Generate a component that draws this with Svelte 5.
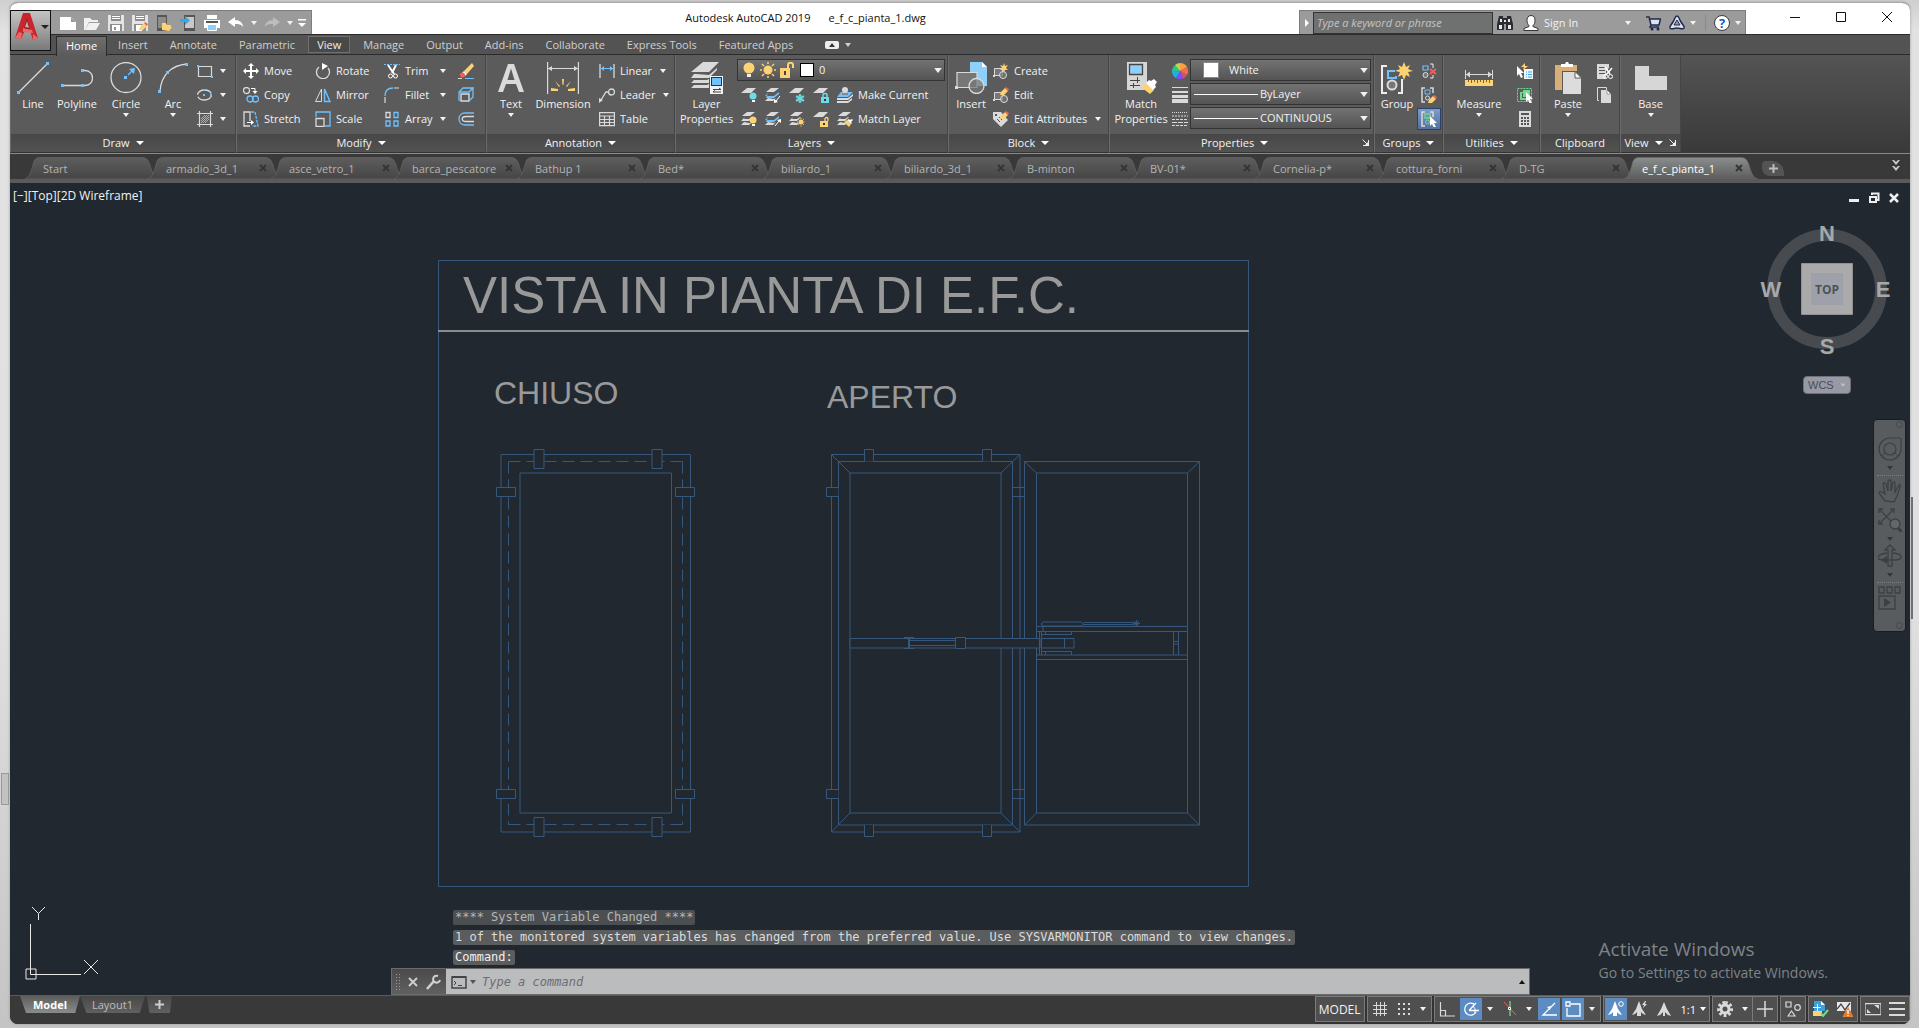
<script>
    let command = $state('');
    let keyword = $state('');
    let activeFile = $state('e_f_c_pianta_1');
    let activeMenu = $state('Home');

    const menus = ['Home', 'Insert', 'Annotate', 'Parametric', 'View', 'Manage', 'Output', 'Add-ins', 'Collaborate', 'Express Tools', 'Featured Apps'];
    const files = ['Start', 'armadio_3d_1', 'asce_vetro_1', 'barca_pescatore', 'Bathup 1', 'Bed*', 'biliardo_1', 'biliardo_3d_1', 'B-minton', 'BV-01*', 'Cornelia-p*', 'cottura_forni', 'D-TG', 'e_f_c_pianta_1'];
    const quick = ['new', 'open', 'save', 'saveas', 'webopen', 'websave', 'print'];

    const modify = [
        ['move', 'Move'], ['rotate', 'Rotate'], ['trim', 'Trim', true], ['erase', ''],
        ['copy', 'Copy'], ['mirror', 'Mirror'], ['fillet', 'Fillet', true], ['explode', ''],
        ['stretch', 'Stretch'], ['scale', 'Scale'], ['array', 'Array', true], ['offset', '']
    ];
    const layerTools = [
        ['layoff', ''], ['layiso', ''], ['layfreeze', ''], ['laylock', ''], ['laycurrent', 'Make Current'],
        ['layon', ''], ['layuniso', ''], ['laythaw', ''], ['layunlock', ''], ['laymatch', 'Match Layer']
    ];

    // palette of the ribbon icons
    const G = '#dadada';
    const B = '#6fc1ff';
    const Y = '#fdd272';
    const R = '#f2605a';
    const N = '#6fd98f';
    const C = '#6bdce8';

    const sheets = `<path fill="${G}" d="M6 1h8l-5 4H1zM4 6L0 10h8l4-4h-1l-3 2H3zM3 11l-3 3h8l2-2-2 0z"/>`;
    const blueSheets = `<path fill="${G}" d="M6 1h8l-5 4H1z"/><path fill="${B}" d="M3 6l-3 3h9l5-4v2l-5 4H1z"/><path fill="${G}" d="M3 11l-3 3h8l3-3-2 1z"/>`;
    const sheet = `<path fill="${G}" d="M6 1h9l-5 5H0z"/>`;
    const pencil = (x, y) => `<g transform="translate(${x} ${y})"><path fill="${Y}" d="M0 8l1-3 4-4 3 3-4 4z"/><path fill="${R}" d="M5 1l1-1 3 2-1 2z"/></g>`;
    const pointer = (x, y) => `<path transform="translate(${x} ${y})" fill="#fff" d="M0 0v10l2-2 2 4 2-1-2-4h3z"/>`;
    const lockY = (c) => `<path fill="${c}" d="M7 10h8v6H7z"/>`;
    const brackets = `<path stroke="${G}" fill="none" stroke-width="1.5" d="M4 1H1v14h3M9 1h3v5"/>`;

    const icons = {
        new: `<path fill="#fff" d="M0 2h11l5 5v8H0z"/><path fill="#9a9a9a" d="M11 2l5 5h-5z"/>`,
        open: `<path fill="#f1f1f1" d="M0 15V3h6l2 2h6v2H5L1 15z"/><path fill="#f1f1f1" d="M5 8h11l-4 7H1z"/>`,
        save: `<path fill="#e4e4e4" d="M0 0h16v16H0z"/><path fill="#8d8d8d" d="M3 0h10v6H3zM2 9h12v7H2z"/><path fill="#fff" d="M4 10h8v6H4zM4 1h8v1H4zM4 3h8v1H4z"/><path fill="#8d8d8d" d="M6 12h2v3H6z"/>`,
        saveas: `<path fill="#e4e4e4" d="M0 0h16v16H0z"/><path fill="#8d8d8d" d="M3 0h10v6H3zM2 9h12v7H2z"/><path fill="#fff" d="M4 10h6v6H4zM4 1h8v1H4zM4 3h8v1H4z"/>${pencil(7, 7)}`,
        webopen: `<path fill="#555" d="M1 0h10v16H1z"/><path fill="#8d8d8d" d="M2 2h8v11H2z"/><path fill="${Y}" d="M6 15V8h4l1 2h4v2h1l-3 4z"/>`,
        websave: `<path fill="#555" d="M4 0h11v16H4z"/><path fill="#c8c8c8" d="M5 2h9v11H5z"/><path fill="#38a6ee" d="M0 4h5V1l5 4.500-5 4.500V7H0z"/>`,
        print: `<path fill="#fff" d="M3 0h10v4H3zM0 5h16v8H0z"/><path fill="#555" d="M2 6h12v2H2z"/><path fill="#8fd0fb" d="M3 9h10v6H3z"/><path fill="none" stroke="#fff" d="M3.500 9.500h9v6h-9z"/>`,
        undo: `<path fill="#fff" d="M0 7l7-5v3c5 0 8 3 8 7-2-3-4-3-8-3v3z"/>`,
        redo: `<path fill="#bdbdbd" d="M16 7L9 2v3c-5 0-8 3-8 7 2-3 4-3 8-3v3z"/>`,
        custom: `<path fill="#fff" d="M4 4h8v1.500H4zM4 8h8l-4 4z"/>`,
        find: `<path fill="#2b2d33" d="M2 1h4v2h4V1h4l2 8v6H9V9H7v6H0V9z"/><path fill="#e9e9e9" d="M3 4h2v3H3zM11 4h2v3h-2zM2 10h3v4H2zM11 10h3v4h-3zM7 5h2v2H7z"/>`,
        user: `<path fill="#fff" stroke="#333" d="M8 .5c3 0 4 2 4 5s-1 4-2 5v1l5 2v2H1v-2l5-2v-1C5 9.500 4 8 4 5.500s1-5 4-5z"/>`,
        cart: `<path fill="#dfe3f0" stroke="#20294d" stroke-width="1.500" d="M1 2h3l2 8h8l1.500-6H5M6 10l-1 2h9"/><circle cx="7" cy="14" r="1.500" fill="#20294d"/><circle cx="13" cy="14" r="1.500" fill="#20294d"/>`,
        a360: `<path fill="#dfe3f0" stroke="#20294d" stroke-width="1.500" d="M8 1c2 0 2 3 4 6s4 5 3 6c-1 2-4 0-7 0s-6 2-7 0c-1-1 1-3 3-6s2-6 4-6z"/><path fill="#9a9a9a" stroke="#20294d" d="M8 5l3 5H5z"/>`,
        help: `<circle cx="8" cy="8" r="7.500" fill="#fff" stroke="#3b3b3b"/><text x="8" y="12.500" font-size="13" font-weight="bold" text-anchor="middle" fill="#1f55b5" font-family="Open Sans">?</text>`,

        line: `<path stroke="${G}" stroke-width="1.300" d="M2 30L31 1"/><path fill="${B}" d="M0 29h3v3H0zM29 0h3v3h-3z"/>`,
        polyline: `<path stroke="${G}" stroke-width="1.300" fill="none" d="M1 23.500h23c10 0 10-15 0-15h-3"/><path fill="${B}" d="M0 22h3v3H0zM20 22h3v3h-3zM20 7h3v3h-3z"/>`,
        circle: `<circle cx="16" cy="15.500" r="15" fill="none" stroke="${G}" stroke-width="1.300"/><path fill="${B}" d="M14 14h3v3h-3zM19 7l6-1-1 6z"/><path stroke="${B}" stroke-width="1.300" d="M18 13l6-6"/>`,
        arc: `<path fill="none" stroke="${G}" stroke-width="1.300" d="M3 29Q4 17 11 10T30 2"/><path fill="${B}" d="M1 28h3v3H1zM9 9h3v3H9zM28 1h3v3h-3z"/>`,
        rect: `<path fill="none" stroke="${G}" stroke-width="1.200" d="M1.500 3.500h13v10h-13z"/><path fill="${B}" d="M0 2h2v2H0zM14 13h2v2h-2z"/>`,
        ellipse: `<ellipse cx="7.500" cy="8" rx="7" ry="5" fill="none" stroke="${G}" stroke-width="1.300" stroke-dasharray="17 2"/><path fill="${B}" d="M6 2h2v2H6zM6 7h2v2H6zM13 7h2v2h-2z"/>`,
        hatch: `<path fill="none" stroke="${G}" stroke-width="1.200" d="M0 2.500h16M0 13.500h16M2.500 0v16M13.500 0v16"/><path stroke="${B}" d="M4 8l4-4M4 12l8-8M8 12l4-4M4 10l6-6M6 12l6-6"/>`,

        move: `<path fill="#fff" d="M8 0l3 3H9v4h4V5l3 3-3 3V9H9v4h2l-3 3-3-3h2V9H3v2L0 8l3-3v2h4V3H5z"/>`,
        rotate: `<path fill="none" stroke="${G}" stroke-width="1.300" d="M4 4a6.500 6.500 0 1 0 9 1"/><path fill="#fff" d="M7 0l6 3-6 4z"/>`,
        trim: `<path stroke="${B}" stroke-dasharray="2 1" d="M0 1.500h16"/><path stroke="#fff" stroke-width="2" d="M4 2l6 9M12 2l-4 8"/><circle cx="6.500" cy="13" r="2" fill="none" stroke="#fff"/><circle cx="11.500" cy="13" r="2" fill="none" stroke="#fff"/>`,
        erase: `<path fill="${Y}" d="M14 0l2 3-7 8-3-3z"/><path fill="#fff" d="M6 8l3 3-2 2-3-3z"/><circle cx="4.500" cy="12" r="2.500" fill="${R}"/><path stroke="${B}" d="M7 15.500h9"/><path stroke="${G}" d="M0 15.500h4"/>`,
        copy: `<circle cx="3.500" cy="3.500" r="3" fill="none" stroke="${G}" stroke-width="1.300"/><circle cx="7" cy="12" r="3" fill="none" stroke="${B}" stroke-width="1.300"/><circle cx="12.500" cy="12" r="3" fill="none" stroke="${B}" stroke-width="1.300"/><path fill="none" stroke="#fff" d="M8 1.500h4v3"/><path fill="#fff" d="M9.500 4h5L12 7z"/>`,
        mirror: `<path fill="none" stroke="${G}" d="M6.500 2v12.500h-6z"/><path fill="none" stroke="${B}" stroke-width="1.400" d="M9.500 2v12.500h5.500z"/>`,
        fillet: `<path fill="none" stroke="${B}" stroke-width="1.300" d="M1 9C1 4 4 1 9 1"/><path stroke="${G}" stroke-width="1.200" d="M10 1h5M1 10v6"/>`,
        explode: `<path fill="none" stroke="${G}" stroke-width="1.400" d="M3 7h8v7H3z"/><path fill="none" stroke="${B}" stroke-width="1.300" d="M1 14V5l4-4h10l-4 4H1M15 1v9l-4 4"/>`,
        stretch: `<path fill="none" stroke="${G}" stroke-width="1.300" d="M7 15H1V1h6v9"/><path fill="none" stroke="${B}" stroke-width="1.300" stroke-dasharray="3 1" d="M8 1h4l3 14H9"/><path stroke="#fff" d="M4 11.500h6"/><path fill="#fff" d="M8 9l3 2.500L8 14z"/>`,
        scale: `<path fill="none" stroke="${B}" stroke-width="1.300" d="M1 6V1h14v14h-5"/><path fill="none" stroke="${G}" stroke-width="1.300" d="M1 7.500h8v8H1z"/>`,
        array: `<path fill="none" stroke="${G}" stroke-width="1.300" d="M2 1.500h4v5H2z"/><path fill="none" stroke="${B}" stroke-width="1.300" d="M10 1.500h4v5h-4zM2 10h4v5H2zM10 10h4v5h-4z"/>`,
        offset: `<path fill="none" stroke="${B}" stroke-width="1.300" d="M16 2H7C-1 2-1 14 7 14h9"/><path fill="none" stroke="${G}" stroke-width="1.300" d="M16 5.500H8c-5 0-5 5 0 5h8"/>`,

        text: `<path fill="${G}" fill-rule="evenodd" d="M13 2h6l10 28h-5l-3-8H11l-3 8H3zM16 6.500L12.500 18h7z"/>`,
        dimension: `<path stroke="${G}" fill="none" stroke-width="1.200" d="M.6 0v32M31.400 0v32M1 6.500h30"/><path fill="${G}" d="M1 6.500l4-2.500v5zM31 6.500L27 4v5z"/><path fill="${Y}" d="M15 17h2l-.5 6h-1zM8 19l5 5-1 1zM24 19l-5 5 1 1zM4 26l7 1v2H4zM28 26l-7 1v2h7z"/>`,
        linear: `<path stroke="${G}" stroke-width="1.300" d="M1 1v14M15 1v14"/><path stroke="${B}" d="M1 5.500h14"/><path fill="${B}" d="M2 5.500L5 3v5zM14 5.500L11 3v5z"/>`,
        leader: `<circle cx="12.500" cy="5" r="3" fill="none" stroke="${G}" stroke-width="1.300"/><path fill="none" stroke="${G}" stroke-width="1.300" d="M9.500 5H7l-5 8"/><path fill="${G}" d="M0 16V11l4 2z"/>`,
        table: `<path fill="none" stroke="${G}" stroke-width="1.200" d="M.6 1.600h14.800v13H.6zM0 5h16M0 8.500h16M0 11.500h16M5.500 5v10M10.500 5v10"/>`,

        layerprops: `<path fill="${G}" d="M12 0h16L18 10H0zM5 12H3l-3 4h18l8-8v-2l-8 7zM3 18l-3 3h18v-4l-2 1zM3 23l-3 3h18v-4l-2 1z"/><path fill="#f2f2f2" d="M19 14h13v18H19z"/><path fill="#333" d="M20 15h11v9H20z"/><path fill="${B}" d="M21 16h9v7h-9z"/><path stroke="#444" fill="none" d="M22 27.500h8M28 26l2 1.500M22 30h8M24 28.500L22 30"/>`,
        bulb: `<circle cx="8" cy="6" r="5.500" fill="${Y}"/><path fill="#eee" d="M6 12h4v3H6z"/>`,
        sun: `<circle cx="8" cy="8" r="4.500" fill="${Y}"/><path stroke="${Y}" stroke-width="1.500" d="M8 0v2M8 14v2M0 8h2M14 8h2M2 2l2 2M12 12l2 2M2 14l2-2M12 4l2-2"/>`,
        unlock: `<path fill="${Y}" d="M1 6h10v10H1z"/><path fill="none" stroke="${Y}" stroke-width="2" d="M9 6V3c0-3 5-3 5 0v3"/><path fill="#444" d="M5 9h2v4H5z"/>`,
        layoff: `${sheet}<circle cx="12" cy="9" r="3.500" fill="${C}"/><path fill="#fff" d="M11 13h3v2h-3z"/>`,
        layiso: `${blueSheets}<path stroke="#fff" d="M15 9l-4 5"/><path fill="#fff" d="M9 16v-4l4 3z"/>`,
        layfreeze: `${sheet}<path stroke="${C}" stroke-width="1.500" fill="none" d="M11 7v9M7 9l8 5M7 14l8-5"/><circle cx="11" cy="11.500" r="3" fill="none" stroke="${C}"/>`,
        laylock: `${sheet}<path fill="${C}" d="M8 10h8v6H8z"/><path fill="none" stroke="${C}" stroke-width="1.500" d="M10 10V8c0-2 4-2 4 0v2"/><path fill="#333" d="M11 12h2v2h-2z"/>`,
        laycurrent: `<path fill="${B}" d="M4 5h12l-5 5H0z"/><circle cx="8" cy="3" r="3" fill="${G}"/><path fill="#888" d="M5 6h6v2H5z"/><path fill="${G}" d="M0 11h11l5-4v2l-5 4H0zM0 14h11l4-3v2l-4 3H0z"/>`,
        layon: `${sheets}<circle cx="12" cy="9" r="3.500" fill="${Y}"/><path fill="#fff" d="M11 13h3v2h-3z"/>`,
        layuniso: `${blueSheets}<path stroke="#fff" d="M10 15l4-5"/><path fill="#fff" d="M16 8v4l-4-3z"/>`,
        laythaw: `${sheets}<circle cx="12" cy="11" r="2.500" fill="${Y}"/><path stroke="${Y}" stroke-dasharray="1 1.500" d="M12 7v9M8 11h8M9 8l6 6M9 14l6-6"/>`,
        layunlock: `${sheet}${lockY(Y)}<path fill="none" stroke="${Y}" stroke-width="1.300" d="M12 10V8c0-2 3-2 3 0v2"/><path fill="#333" d="M10 12h2v2h-2z"/>`,
        laymatch: `${sheets}<path fill="${Y}" d="M7 11l3-2 4 4-2 3z"/><path fill="#fff" d="M10 9l2-1 1 1 2-1 1 1-2 2 1 1-1 1z"/>`,

        insert: `<path fill="#8fd0fb" d="M15 0h12l5 5v19H15z"/><path fill="#fff" d="M27 0l5 5h-5z"/><path fill="#777" stroke="${G}" stroke-width="1.200" d="M2 10.500h20v15H2z"/><circle cx="21.500" cy="24" r="7.500" fill="#777" fill-opacity=".7" stroke="${G}" stroke-width="1.300"/><path fill="${G}" d="M0 24h3v3H0z"/>`,
        blockcreate: `<path fill="#777" stroke="${G}" d="M1.500 5.500h8v7h-8z"/><circle cx="10" cy="12" r="3.500" fill="#777" fill-opacity=".7" stroke="${G}"/><path fill="${G}" d="M0 12h2v2H0z"/><path fill="${Y}" d="M11 0l1 3 3-1-2 3 2 2-3 0-1 3-1-3-3 0 2-2-2-3 3 1z"/>`,
        blockedit: `<path fill="#777" stroke="${G}" d="M1.500 5.500h8v7h-8z"/><circle cx="11" cy="12" r="3.500" fill="#777" fill-opacity=".7" stroke="${G}"/><path fill="${G}" d="M0 12h2v2H0z"/>${pencil(7, 0)}`,
        attredit: `<path fill="${G}" d="M0 1h8l7 8-7 7-8-8z"/><path stroke="#555" d="M4 8l3 3M6 6l3 3"/><path fill="#555" d="M2 3h2v2H2z"/>${pencil(7, 0)}`,

        matchprops: `<path fill="#d6d6d6" d="M2 0h20v28H2z"/><path fill="#8fd0fb" stroke="#444" stroke-width="1.300" d="M4.500 2.500h13v10h-13z"/><path stroke="#444" d="M5 18.500h10M5 23.500h10M12.500 15v6M8.500 21v5"/><path fill="${Y}" d="M16 25l6-4 7 7-4 4z"/><path fill="#fff" d="M21 21l3-3 2 1 3-2 3 3-2 3 1 2-3 3z"/>`,
        colors: `<path fill="#f9a03f" d="M8 8V0a8 8 0 0 1 7 4z"/><path fill="#f26b4e" d="M8 8l7-4a8 8 0 0 1 0 8z"/><path fill="#e04f5f" d="M8 8l7 4a8 8 0 0 1-4 3.500z"/><path fill="#7c4dff" d="M8 8l3 7.500a8 8 0 0 1-7-.5z"/><path fill="#1fb0e0" d="M8 8l-4 7a8 8 0 0 1-4-6z"/><path fill="#2fc48d" d="M8 8L0 9a8 8 0 0 1 3-7z"/><path fill="#b6d957" d="M8 8L3 2a8 8 0 0 1 5-2z"/>`,
        weights: `<path fill="${G}" d="M0 0h16v1H0zM0 4h16v2H0zM0 8h16v3H0zM0 12h16v4H0z"/>`,
        types: `<path stroke="${G}" stroke-dasharray="1 1" d="M0 1.500h16"/><path stroke="${G}" stroke-dasharray="2 1" d="M0 5h16"/><path stroke="${G}" stroke-dasharray="3 1" d="M0 8.500h16M0 14.500h16"/><path stroke="${G}" stroke-dasharray="5 1" d="M0 11.500h16"/>`,

        group: `<path fill="none" stroke="#eee" stroke-width="2" d="M6 4H1v27h5M17 31h4V17"/><path fill="none" stroke="${B}" stroke-width="2" d="M14 9H7v7h8v-2"/><circle cx="11" cy="23" r="4.500" fill="#777" stroke="${G}" stroke-width="2"/><path fill="${Y}" d="M23 0l2 5 4-2-2 4 5 2-5 1 2 5-4-2-2 5-2-5-4 2 2-5-5-1 5-2-2-4 4 2z"/>`,
        ungroup: `<path fill="none" stroke="${B}" stroke-width="1.200" d="M2 3h5v4H2z"/><circle cx="4.500" cy="12" r="2.500" fill="#777" stroke="${G}"/><path fill="none" stroke="#eee" d="M9 1h3v4M9 15h3v-3"/><path stroke="${R}" stroke-width="2" d="M9 6l6 5M15 6l-6 5"/>`,
        groupedit: `${brackets}<path fill="none" stroke="${B}" d="M4 3h5v4H4z"/><circle cx="6.500" cy="11" r="2" fill="none" stroke="${G}"/>${pencil(7, 8)}`,
        grouppick: `${brackets}<path fill="none" stroke="${N}" stroke-width="1.300" d="M4 3h5v4H4z"/><circle cx="6.500" cy="11" r="2" fill="none" stroke="${N}"/>${pointer(9, 5)}`,

        measure: `<path stroke="${G}" fill="none" d="M2.500 8v9M29.500 8v9M3 12.500h26"/><path fill="${G}" d="M3 12.500l4-3v6zM29 12.500l-4-3v6z"/><path fill="${Y}" d="M2 18h28v6H2z"/><path stroke="#7c6430" d="M5.500 18v2M8.500 18v3M11.500 18v2M14.500 18v3M17.500 18v2M20.500 18v3M23.500 18v2M26.500 18v3"/>`,
        quicksel: `<path fill="#f4f4f4" d="M7 6h9v10H7z"/><path stroke="#3aa0e0" stroke-width="1.200" d="M9 9h1M11 9h4M9 11.500h1M11 11.500h4M9 14h1M11 14h4"/>${pointer(0, 3)}<path fill="${Y}" d="M8 0l-4 4h3l-1 3 5-4H8z"/>`,
        selectall: `<path fill="none" stroke="${N}" stroke-dasharray="2 1" d="M.5 1.500h14v13H.5z"/><path fill="${N}" d="M6 3h7v6H9v4H3V5h3z"/><path fill="#5b5b5b" d="M5 6h1v4h4v1H5z"/>${pointer(9, 5)}`,
        calc: `<path fill="${G}" d="M2 0h12v16H2z"/><path fill="#555" d="M4 2h8v2H4zM4 6h2v2H4zM7 6h2v2H7zM10 6h2v2h-2zM4 9h2v2H4zM7 9h2v2H7zM10 9h2v2h-2zM4 12h2v2H4zM7 12h2v2H7zM10 12h2v2h-2z"/>`,

        paste: `<path fill="#dcae77" d="M3 3h22v25H3z"/><path fill="#fff" d="M9 5V2h4l1-2h2l1 2h4v3z"/><path fill="#5b5b5b" d="M10 9h20v23H10z"/><path fill="#dcdcdc" d="M11 10h12l6 6v16H11z"/><path fill="#fff" stroke="#5b5b5b" d="M23 9.500l6.500 6.500H23z"/>`,
        cut: `<path fill="${G}" d="M0 1h12v4l-3 3v8H0z"/><path stroke="#555" d="M2 4.500h7M2 7.500h6M2 10.500h6"/><path stroke="#fff" stroke-width="1.500" d="M8 4l5 7M15 5l-6 7"/><circle cx="8.500" cy="13.500" r="2" fill="none" stroke="#fff"/><circle cx="13.500" cy="13.500" r="2" fill="none" stroke="#fff"/>`,
        copyclip: `<path fill="none" stroke="${G}" d="M2 13.500H.5V.5h9V3"/><path fill="${G}" d="M4 3h6l4 4v9H4z"/><path fill="#fff" stroke="#555" stroke-width=".5" d="M10 3l4 4h-4z"/>`,
        base: `<path fill="#d6d6d6" d="M0 4h14v10h18v14H0z"/>`,
        launch: `<path fill="none" stroke="#eee" d="M7.500 2v5.500H2M1.500 1.500l5 5"/><path fill="#eee" d="M8 3v5H3z"/>`,

        wheel: `<path fill="none" stroke="#3c4043" stroke-width="1.200" d="M12 1h9q2 0 2 2v9a11 11 0 1 1-11-11z"/><circle cx="12" cy="12" r="6" fill="none" stroke="#3c4043" stroke-width="1.200"/><path stroke="#3c4043" d="M4 19l3-3M20 19l-3-3"/>`,
        hand: `<path fill="none" stroke="#3c4043" stroke-width="1.300" d="M7 22L1 14q0-2 3-1l3 2L5 5q1-2 3 0l2 7V2q2-2 3 0v10l2-9q2-1 2 1v9l4-7q2-1 1 2l-3 9-3 6z"/>`,
        zoomext: `<path fill="none" stroke="#3c4043" stroke-width="1.300" d="M1 1l15 15M16 1L1 16M1 5V1h4M12 1h4v4M1 12v4h4"/><circle cx="17" cy="16" r="5" fill="#63676a" stroke="#3c4043" stroke-width="1.300"/><path stroke="#3c4043" stroke-width="3" d="M20 20l4 4"/>`,
        orbit: `<path fill="none" stroke="#3c4043" stroke-width="1.300" d="M10 22V6H7l5-5 5 5h-3v16zM9 9C-3 11-3 16 6 16h12c8-1 7-6-3-7"/><path fill="#3c4043" d="M3 16l6-4v8z"/>`,
        motion: `<path fill="none" stroke="#3c4043" stroke-width="1.300" d="M1 1h5v6H1zM9 1h5v6H9zM17 1h5v6h-5zM1 10h16v13H1z"/><path fill="#3c4043" d="M6 12l7 4.500L6 21z"/>`,

        grid: `<path stroke="${G}" d="M4.500 1v14M8.500 1v14M12.500 1v14M1 4.500h14M1 8.500h14M1 12.500h14"/>`,
        snap: `<path stroke="${G}" stroke-width="2" stroke-dasharray="2 3" d="M2 3h13M2 8h13M2 13h13"/>`,
        ortho: `<path fill="none" stroke="${G}" stroke-width="1.200" d="M1.500 1v14H16M1.500 9.500h5V15"/>`,
        polar: `<path fill="none" stroke="#fff" stroke-width="1.300" d="M12 4a6 6 0 1 0 1 7M6 9.500L13 2M6 9.500h10"/><path fill="none" stroke="#fff" d="M10 5q3 2 2 7"/>`,
        iso: `<path stroke="${R}" d="M2 1l12 13"/><path stroke="${N}" stroke-width="1.300" d="M8 0v15"/><path fill="#444" stroke="#fff" d="M6.500 6.500h2v2h-2z"/>`,
        track: `<path fill="none" stroke="#fff" stroke-width="1.300" d="M14 2L2 14h14"/><path fill="#fff" d="M6 6l4-1-1 4z"/>`,
        osnap: `<path fill="none" stroke="#fff" stroke-width="1.300" d="M6 3h9v12H2V7M1 1h4v4H1z"/>`,
        anno1: `<path fill="#fff" d="M7 0l3 8 4 6-3-1-2-2v4H5v-4l-2 2-3 1 4-6z"/><circle cx="13" cy="3" r="2.300" fill="none" stroke="#fff"/>`,
        anno2: `<path fill="${G}" d="M7 0l3 8 4 6-3-1-2-2v4H5v-4l-2 2-3 1 4-6z"/><path fill="${G}" d="M13 0l-3 4h2l-1 3 4-4h-2l1-3z"/>`,
        anno3: `<path fill="${G}" d="M8 1l3 7 4 7-3-1-3-3v4H7v-4l-3 3-3 1 4-7z"/>`,
        gear: `<path fill="none" stroke="${G}" stroke-width="3" stroke-dasharray="2.600 2.100" d="M8 1.500a6.500 6.500 0 1 0 .1 0z"/><circle cx="8" cy="8" r="4" fill="none" stroke="${G}" stroke-width="3"/>`,
        plus: `<path stroke="${G}" stroke-width="1.500" d="M8 0v16M0 8h16"/>`,
        isolate: `<path fill="none" stroke="${G}" stroke-width="1.200" d="M1 1h5v5H1zM3 15l3.500-5L10 15z"/><circle cx="12.500" cy="6.500" r="2.800" fill="none" stroke="${G}" stroke-width="1.200"/>`,
        hardware: `<path fill="#3aa0e0" d="M1 0h7l4 4v6H1z"/><path fill="#fff" d="M8 0l4 4H8z"/><path fill="${Y}" d="M0 10h9v5H0z"/><path stroke="#fff" d="M0 6.500h8M4.500 3v7"/><path fill="none" stroke="${N}" stroke-width="2" d="M8 12l2 3 5-6"/>`,
        monitor: `<path fill="#e8e8e8" d="M0 1h14v9H0z"/><path fill="none" stroke="#444" stroke-width="1.300" d="M0 8l4-5 4 6 5-7"/><path fill="#e87722" stroke="#f3a76b" stroke-width=".5" d="M11 6l5 10H6z"/><path stroke="#fff" stroke-width="1.300" d="M11 9v4M11 14v1"/>`,
        clean: `<path fill="none" stroke="${G}" stroke-width="1.200" d="M0 2.600h16v11H0z"/><path fill="${G}" d="M9 4h5v4zM2 12V8l4 4z"/>`,
        menu: `<path stroke="${G}" stroke-width="2" d="M0 2h16M0 8h16M0 14h16"/>`,
        wrench: `<path fill="none" stroke="#d0d0d0" stroke-width="2.500" d="M2 15l7-8"/><path fill="none" stroke="#d0d0d0" stroke-width="2" d="M13 2a3.500 3.500 0 1 0 2 4"/>`,
        prompt: `<path fill="none" stroke="#444" stroke-width="1.500" d="M1 3h14v11H1z"/><path stroke="#444" stroke-width="2" d="M1 3h14"/><path fill="none" stroke="#444" d="M3 7l2 2-2 2M7 11.500h4"/>`
    };
</script>

{#snippet icon(name, size = 16)}
    <svg class="icon" width={size} height={size} viewBox="0 0 {size} {size}" aria-hidden="true">{@html icons[name]}</svg>
{/snippet}

{#snippet arrow()}
    <svg class="arrow" width="6" height="4" viewBox="0 0 6 4" aria-hidden="true"><path d="M0 0h6L3 4z" fill="currentColor" /></svg>
{/snippet}

{#snippet big(name, label, cls = '', drop = false)}
    <button class="big {cls}">
        {@render icon(name, 32)}
        <span>{label}</span>
        {#if drop}{@render arrow()}{/if}
    </button>
{/snippet}

{#snippet small(name, label = '', drop = false)}
    <button class="small" aria-label={label || name}>
        {@render icon(name)}
        {#if label}<span>{label}</span>{/if}
        {#if drop}{@render arrow()}{/if}
    </button>
{/snippet}

{#snippet title(text, drop = true, launch = false)}
    <div class="panel-title" class:launchable={launch}>
        <span>{text}</span>
        {#if drop}<svg width="8" height="4" viewBox="0 0 8 4" aria-hidden="true"><path d="M0 0h8L4 4z" fill="#fff" /></svg>{/if}
        {#if launch}<button class="launch" aria-label="{text} settings">{@render icon('launch', 10)}</button>{/if}
    </div>
{/snippet}

{#snippet toggle(name, on = false)}
    <button class="toggle" class:on aria-label={name} aria-pressed={on}>{@render icon(name)}</button>
{/snippet}

{#snippet more(label)}
    <button class="more" aria-label={label}>{@render arrow()}</button>
{/snippet}

<div class="desktop">
    <div class="window">
        <header class="titlebar">
            <button class="app" aria-label="Application menu">
                <svg width="24" height="28" viewBox="0 0 24 28" aria-hidden="true">
                    <path fill="#c9252c" d="M8 0h7l8 25-5 2-3-9-5-1-4 9-6-1z" />
                    <path fill="#8e1418" d="M12 5l3 13-5-1-2 3z" />
                    <path fill="#e8686a" d="M8 15l9 2 1 3-10-1zM0 25l4-6 3 1-1 6zM18 21l5 4-5 2z" />
                    <path fill="#b4b4b4" d="M12 8l2 7-4-1z" />
                </svg>
                <svg width="8" height="4" viewBox="0 0 8 4" aria-hidden="true"><path d="M0 0h8L4 4z" fill="#222" /></svg>
            </button>
            <div class="quick">
                {#each quick as name}
                    <button aria-label={name}>{@render icon(name)}</button>
                {/each}
                <button aria-label="undo">{@render icon('undo')}</button>
                <button class="thin" aria-label="undo list">{@render arrow()}</button>
                <button aria-label="redo">{@render icon('redo')}</button>
                <button class="thin" aria-label="redo list">{@render arrow()}</button>
                <button class="thin" aria-label="customize">{@render icon('custom')}</button>
            </div>
            <h1><span>Autodesk AutoCAD 2019</span><span>e_f_c_pianta_1.dwg</span></h1>
            <div class="info">
                <button class="expand" aria-label="Collapse search"><svg width="4" height="8" viewBox="0 0 4 8"><path d="M0 0l4 4-4 4z" fill="#fff" /></svg></button>
                <input aria-label="Search help" placeholder="Type a keyword or phrase" bind:value={keyword} />
                <button aria-label="Search">{@render icon('find')}</button>
                <button class="sign">{@render icon('user')}<span>Sign In</span>{@render arrow()}</button>
                <button aria-label="Store">{@render icon('cart')}</button>
                <button class="wide" aria-label="Autodesk App">{@render icon('a360')}{@render arrow()}</button>
                <button class="wide help" aria-label="Help">{@render icon('help')}{@render arrow()}</button>
            </div>
            <div class="controls">
                <button aria-label="Minimize"><svg width="12" height="12"><path d="M1 6.500h10" stroke="#111" /></svg></button>
                <button aria-label="Maximize"><svg width="12" height="12"><path d="M1.500 1.500h9v9h-9z" stroke="#111" fill="none" /></svg></button>
                <button aria-label="Close"><svg width="12" height="12"><path d="M1 1l10 10M11 1L1 11" stroke="#111" /></svg></button>
            </div>
        </header>

        <nav class="menus">
            {#each menus as menu}
                <button class:active={menu === activeMenu} class:hover={menu === 'View'} onclick={() => (activeMenu = menu)}>{menu}</button>
            {/each}
            <button class="pin" aria-label="Minimize ribbon">
                <svg width="14" height="8" viewBox="0 0 14 8"><rect width="14" height="8" rx="2" fill="#eee" /><path d="M4 6h6L7 2z" fill="#333" /></svg>
                {@render arrow()}
            </button>
        </nav>

        <div class="ribbon">
            <section class="panel draw">
                <div class="tools">
                    {@render big('line', 'Line', 'w44')}
                    {@render big('polyline', 'Polyline', 'w44')}
                    {@render big('circle', 'Circle', 'w54', true)}
                    {@render big('arc', 'Arc', 'w40', true)}
                    <div class="stack">
                        {@render small('rect', '', true)}
                        {@render small('ellipse', '', true)}
                        {@render small('hatch', '', true)}
                    </div>
                </div>
                {@render title('Draw')}
            </section>
            <section class="panel modify">
                <div class="tools">
                    <div class="matrix">
                        {#each modify as [name, label, drop]}
                            {@render small(name, label, drop)}
                        {/each}
                    </div>
                </div>
                {@render title('Modify')}
            </section>
            <section class="panel annotation">
                <div class="tools">
                    {@render big('text', 'Text', 'w48', true)}
                    {@render big('dimension', 'Dimension', 'w56')}
                    <div class="stack indent">
                        {@render small('linear', 'Linear', true)}
                        {@render small('leader', 'Leader', true)}
                        {@render small('table', 'Table')}
                    </div>
                </div>
                {@render title('Annotation')}
            </section>
            <section class="panel layers">
                <div class="tools">
                    {@render big('layerprops', 'Layer Properties', 'w62')}
                    <div class="stack grow">
                        <div class="combo">
                            <span class="states">{@render icon('bulb')}{@render icon('sun')}{@render icon('unlock')}<i class="swatch"></i></span>
                            <select class="layer" aria-label="Layer"><option>0</option></select>
                            {@render arrow()}
                        </div>
                        <div class="layer-grid">
                            {#each layerTools as [name, label]}
                                {@render small(name, label)}
                            {/each}
                        </div>
                    </div>
                </div>
                {@render title('Layers')}
            </section>
            <section class="panel block">
                <div class="tools">
                    {@render big('insert', 'Insert', 'w44')}
                    <div class="stack">
                        {@render small('blockcreate', 'Create')}
                        {@render small('blockedit', 'Edit')}
                        {@render small('attredit', 'Edit Attributes', true)}
                    </div>
                </div>
                {@render title('Block')}
            </section>
            <section class="panel properties">
                <div class="tools">
                    {@render big('matchprops', 'Match Properties', 'w62')}
                    <div class="stack grow">
                        <div class="prop">
                            {@render icon('colors')}
                            <div class="combo">
                                <span class="states"><i class="swatch plain"></i></span>
                                <select class="color" aria-label="Object color"><option>White</option></select>
                                {@render arrow()}
                            </div>
                        </div>
                        <div class="prop">
                            {@render icon('weights')}
                            <div class="combo">
                                <span class="rule"></span>
                                <select class="style" aria-label="Lineweight"><option>ByLayer</option></select>
                                {@render arrow()}
                            </div>
                        </div>
                        <div class="prop">
                            {@render icon('types')}
                            <div class="combo">
                                <span class="rule"></span>
                                <select class="style" aria-label="Linetype"><option>CONTINUOUS</option></select>
                                {@render arrow()}
                            </div>
                        </div>
                    </div>
                </div>
                {@render title('Properties', true, true)}
            </section>
            <section class="panel groups">
                <div class="tools">
                    {@render big('group', 'Group', 'w44')}
                    <div class="stack">
                        {@render small('ungroup')}
                        {@render small('groupedit')}
                        <div class="pressed">{@render small('grouppick')}</div>
                    </div>
                </div>
                {@render title('Groups')}
            </section>
            <section class="panel utilities">
                <div class="tools">
                    {@render big('measure', 'Measure', 'w70', true)}
                    <div class="stack">
                        {@render small('quicksel')}
                        {@render small('selectall')}
                        {@render small('calc')}
                    </div>
                </div>
                {@render title('Utilities')}
            </section>
            <section class="panel clipboard">
                <div class="tools">
                    {@render big('paste', 'Paste', 'w54', true)}
                    <div class="stack">
                        {@render small('cut')}
                        {@render small('copyclip')}
                    </div>
                </div>
                {@render title('Clipboard', false)}
            </section>
            <section class="panel view">
                <div class="tools">
                    {@render big('base', 'Base', 'w60', true)}
                </div>
                {@render title('View', true, true)}
            </section>
        </div>

        <div class="files">
            {#each files as file}
                <div class="file" class:current={file === activeFile}>
                    <svg class="shape" viewBox="0 0 134 22" preserveAspectRatio="none" aria-hidden="true">
                        <defs>
                            <linearGradient id="tab-off" x2="0" y2="1"><stop offset="0" stop-color="#5e5e5e" /><stop offset="1" stop-color="#454545" /></linearGradient>
                            <linearGradient id="tab-on" x2="0" y2="1"><stop offset="0" stop-color="#8b8e8e" /><stop offset="1" stop-color="#5c5c5c" /></linearGradient>
                        </defs>
                        <path d="M0 22C5 20 6 14 8 8C9 2 11 .5 16 .5H116C121 .5 123 2 125 8C127 15 129 21 134 22z" fill="url(#{file === activeFile ? 'tab-on' : 'tab-off'})" stroke="#6b6b6b" stroke-width=".6" />
                    </svg>
                    <button class="name" onclick={() => (activeFile = file)}>{file}</button>
                    {#if file !== 'Start'}
                        <button class="close" aria-label="Close {file}"><svg width="8" height="8" viewBox="0 0 8 8"><path d="M1 1l6 6M7 1L1 7" stroke="#353535" stroke-width="2" /></svg></button>
                    {/if}
                </div>
            {/each}
            <button class="add" aria-label="New drawing"><svg width="9" height="9" viewBox="0 0 9 9"><path d="M4.500 0v9M0 4.500h9" stroke="#bbb" stroke-width="2" /></svg></button>
            <button class="overflow" aria-label="More tabs"><svg width="8" height="12" viewBox="0 0 8 12"><path d="M0 0h2l2 2 2-2h2L4 5zM0 6h2l2 2 2-2h2l-4 5z" fill="#ccc" /></svg></button>
        </div>

        <main class="viewport">
            <svg class="drawing" viewBox="10 183 1900 812" role="img" aria-label="Drawing">
                <g class="blue">
                    <path d="M438.500 260.500h810v626h-810z" />
                    <!-- chiuso -->
                    <path d="M501 454.500h189.500v377.500h-189.500zM520 473h151.500v340h-151.500z" />
                    <path d="M508.500 461.500h174M508.500 824.500h174M508.500 461.500v363M682.500 461.500v363" stroke-dasharray="12 6" />
                    <g class="solid">
                        {#each [449, 817] as y}
                            <path d="M534 {y}.500h10v19h-10zM652 {y}.500h10v19h-10z" />
                        {/each}
                        {#each [487, 789] as y}
                            <path d="M496.500 {y}.500h19v9h-19zM675.500 {y}.500h19v9h-19z" />
                        {/each}
                    </g>
                    <!-- aperto -->
                    <path d="M831.500 454.500H1020V832H831.500zM838.500 461.500H1012.500V825H838.500zM850 473H1001V813H850z" />
                    <path d="M831.500 454.500L850 473M1020 454.500L1001 473M831.500 832L850 813M1020 832L1001 813" />
                    <path d="M1024.500 461.500H1199.500V825H1024.500zM1036.500 473H1187.500V813H1036.500z" />
                    <path d="M1024.500 461.500L1036.500 473M1199.500 461.500L1187.500 473M1024.500 825L1036.500 813M1199.500 825L1187.500 813" />
                    <g class="solid">
                        <path d="M864.500 461.500v-12h9v12M982.500 461.500v-12h9v12M864.500 825v11.500h9V825M982.500 825v11.500h9V825" />
                        <path d="M838.500 487.500h-12v9h12M838.500 789.500h-12v9h12" />
                        <path d="M850 638.500H1040v9.500H850z" />
                    </g>
                    <path d="M1012.500 487.500h12v9h-12zM1012.500 789.500h12v9h-12z" />
                    <path d="M909.500 638v10M908.500 638v10M909 640.500h47M909 645.500h47M904 637.500h10M904 648.500h10" />
                    <path class="solid" d="M955.500 637.500h10v11h-10z" />
                    <path d="M1036.500 626.500h151M1036.500 631.500h151M1036.500 655h151M1036.500 659.500h151" />
                    <path d="M1039.500 631v24M1041.500 631v24M1042 638.500h32v9.500h-32M1064.500 638v10" />
                    <path d="M1042 634.500h29.500v-3M1045.500 631v3M1042 651.500h29.500v3.500M1045.500 652v3M1043 626v5" />
                    <path d="M1173.500 631v24M1178.500 631v24M1173.500 641.500h5M1173.500 644h5" />
                    <path d="M1043 622h38l3 2-3 2h-38l-2-2zM1084 622.500h50M1084 624.500h50M1134 621l5 5M1139 621l-5 5M1136.500 620v7M1133 623.500h7" />
                </g>
                <path d="M438 331h811" stroke="#8c8c8c" stroke-width="2" />
                <text class="head" x="463" y="313">VISTA IN PIANTA DI E.F.C.</text>
                <text class="sub" x="494" y="404">CHIUSO</text>
                <text class="sub" x="827" y="408">APERTO</text>
                <path class="ucs" d="M30.500 924v50.500H81M26 969h10v10H26zM32 907l6.500 6.500L45 907M38.500 913.500V920M84 960l14 14M98 960l-14 14" />
            </svg>

            <button class="viewlabel">[−][Top][2D Wireframe]</button>

            <div class="doc-controls">
                <button aria-label="Minimize drawing"><svg width="12" height="12"><path d="M1 7h10v3H1z" fill="#eee" /></svg></button>
                <button aria-label="Restore drawing"><svg width="12" height="12"><path d="M4 3V1.500h6.500V8H9M2 5h6v5H2z" fill="none" stroke="#eee" stroke-width="2" /></svg></button>
                <button aria-label="Close drawing"><svg width="12" height="12"><path d="M2 2l8 8M10 2l-8 8" stroke="#eee" stroke-width="2.500" /></svg></button>
            </div>

            <div class="cube">
                <svg width="136" height="146" viewBox="0 -2 136 146" role="img" aria-label="View cube">
                    <circle cx="68" cy="68" r="54" fill="none" stroke="#474b50" stroke-width="12" />
                    <path fill="#a9aaa9" stroke="#8f9190" d="M42.500 42.500h51v51h-51z" />
                    <path fill="#9fa1aa" d="M52 52h32v32H52z" />
                    <g class="dirs" text-anchor="middle">
                        <text x="68" y="20">N</text>
                        <text x="68" y="133">S</text>
                        <text x="12" y="76">W</text>
                        <text x="124" y="76">E</text>
                    </g>
                    <text class="top" x="68" y="73" text-anchor="middle">TOP</text>
                </svg>
                <button class="wcs">WCS <svg width="8" height="5" viewBox="0 0 8 5"><path d="M0 0h8L4 5z" fill="#b9bbc0" stroke="#7b7e86" stroke-width=".6" /></svg></button>
            </div>

            <div class="navbar">
                <span class="knob"></span>
                <button aria-label="Steering wheel">{@render icon('wheel', 24)}{@render arrow()}</button>
                <button class="ruled" aria-label="Pan">{@render icon('hand', 24)}</button>
                <button aria-label="Zoom extents">{@render icon('zoomext', 24)}{@render arrow()}</button>
                <button aria-label="Orbit">{@render icon('orbit', 24)}{@render arrow()}</button>
                <button class="ruled" aria-label="Show motion">{@render icon('motion', 24)}</button>
                <span class="knob"></span>
            </div>

            <div class="activate">
                <p class="large">Activate Windows</p>
                <p>Go to Settings to activate Windows.</p>
            </div>

            <div class="console">
                <div class="history">
                    <p class="old">**** System Variable Changed ****</p>
                    <p class="mid">1 of the monitored system variables has changed from the preferred value. Use SYSVARMONITOR command to view changes.</p>
                    <p>Command:</p>
                </div>
                <div class="cmd">
                    <div class="grip">
                        <span class="dots"></span>
                        <button aria-label="Close command line"><svg width="10" height="10" viewBox="0 0 10 10"><path d="M1 1l8 8M9 1L1 9" stroke="#ccc" stroke-width="2" /></svg></button>
                        <button aria-label="Customize">{@render icon('wrench')}</button>
                    </div>
                    <button class="recent" aria-label="Recent commands">{@render icon('prompt')}{@render arrow()}</button>
                    <input aria-label="Command" placeholder="Type a command" bind:value={command} />
                    <button class="up" aria-label="Command history"><svg width="6" height="4" viewBox="0 0 6 4"><path d="M0 4h6L3 0z" fill="#111" /></svg></button>
                </div>
            </div>
        </main>

        <footer class="status">
            <div class="layouts">
                <button class="layout on"><span>Model</span></button>
                <button class="layout"><span>Layout1</span></button>
                <button class="layout plus" aria-label="New layout"><svg width="9" height="9" viewBox="0 0 9 9"><path d="M4.500 0v9M0 4.500h9" stroke="#ccc" stroke-width="2" /></svg></button>
            </div>
            <div class="toggles">
                <div class="set"><button class="word">MODEL</button></div>
                <div class="set">{@render toggle('grid')}{@render toggle('snap')}{@render more('Snap settings')}</div>
                <div class="set">
                    {@render toggle('ortho')}{@render toggle('polar', true)}{@render more('Polar angles')}
                    {@render toggle('iso')}{@render more('Isoplanes')}
                    {@render toggle('track', true)}{@render toggle('osnap', true)}{@render more('Object snaps')}
                </div>
                <div class="set">
                    {@render toggle('anno1', true)}{@render toggle('anno2')}{@render toggle('anno3')}
                    <button class="ratio">1:1{@render arrow()}</button>
                </div>
                <div class="set">{@render toggle('gear')}{@render more('Workspaces')}<span class="split"></span>{@render toggle('plus')}</div>
                <div class="set">{@render toggle('isolate')}</div>
                <div class="set">{@render toggle('hardware')}{@render toggle('monitor')}</div>
                <div class="set">{@render toggle('clean')}{@render toggle('menu')}</div>
            </div>
        </footer>
    </div>
    <i class="behind-left"></i>
    <i class="behind-right"></i>
</div>

<style>
    :global(body) {
        margin: 0;
    }
    .desktop {
        position: relative;
        box-sizing: border-box;
        height: 100vh;
        padding: 2px 9px 4px 10px;
        background: linear-gradient(#cfcfcf 0, #e2e2e2 30px, #e0e0e0 60%, #c4c4c4 100%);
        font-family: "Open Sans", "Noto Sans", sans-serif;
        font-size: 11px;
        color: #f2f2f2;
        overflow: hidden;
    }
    .behind-left {
        position: absolute;
        left: 1px;
        top: 773px;
        width: 8px;
        height: 32px;
        background: #c2c2c2;
        border: 1px solid #999;
        box-sizing: border-box;
    }
    .behind-right {
        position: absolute;
        right: 6px;
        top: 497px;
        width: 2px;
        height: 122px;
        background: #707070;
    }
    .window {
        display: flex;
        flex-direction: column;
        height: 100%;
        box-sizing: border-box;
        border-top: 1px solid #aaa;
        border-radius: 8px;
        background: #393939;
        overflow: hidden;
        box-shadow: 0 0 3px #999;
    }
    button {
        display: flex;
        align-items: center;
        margin: 0;
        padding: 0;
        border: 0;
        background: none;
        font: inherit;
        color: inherit;
        white-space: nowrap;
    }
    p {
        margin: 0;
    }
    svg {
        flex: none;
        display: block;
    }

    /* title bar */
    .titlebar {
        position: relative;
        display: flex;
        flex: none;
        height: 31px;
        background: #fff;
        padding-left: 41px;
    }
    .app {
        position: absolute;
        z-index: 2;
        left: 0;
        top: 7px;
        width: 41px;
        height: 41px;
        box-sizing: border-box;
        padding: 0 2px 8px 4px;
        gap: 2px;
        border: 1px solid #111;
        background: linear-gradient(#c4c4c4, #7a7a7a);
    }
    .quick {
        display: flex;
        align-items: center;
        box-sizing: border-box;
        width: 261px;
        margin-top: 7px;
        padding-left: 5px;
        background: #9b9b9b;
        border-top: 1px solid #7d7d7d;
        border-right: 1px solid #7d7d7d;
    }
    .quick button {
        width: 24px;
        justify-content: center;
    }
    .quick .thin {
        width: 12px;
    }
    h1 {
        display: flex;
        flex: 1;
        justify-content: center;
        gap: 18px;
        margin: 0;
        font-size: 11px;
        font-weight: 400;
        line-height: 29px;
        color: #111;
    }
    .info {
        display: flex;
        align-items: center;
        box-sizing: border-box;
        margin: 7px 26px 0 0;
        width: 447px;
        background: #9b9b9b;
        border: 1px solid #7d7d7d;
        border-bottom: 0;
    }
    .info button {
        width: 24px;
        justify-content: center;
    }
    .info .expand {
        width: 13px;
    }
    .info input {
        box-sizing: border-box;
        width: 180px;
        height: 22px;
        padding: 0 3px;
        border: 1px solid #333;
        background: #6f7170;
        font: italic 11px "Open Sans", sans-serif;
        color: #fff;
    }
    .info input::placeholder {
        color: #c4c4c4;
    }
    .info .sign {
        width: 124px;
        padding: 0 10px 0 6px;
        gap: 5px;
        justify-content: flex-start;
    }
    .sign .arrow {
        margin-left: auto;
    }
    .info .wide {
        width: 40px;
        padding-left: 4px;
        gap: 5px;
        justify-content: flex-start;
    }
    .info .help {
        padding-left: 8px;
        border-left: 1px solid #8a8a8a;
    }
    .controls {
        display: flex;
    }
    .controls button {
        width: 46px;
        height: 28px;
        justify-content: center;
    }

    /* menu tabs */
    .menus {
        display: flex;
        flex: none;
        height: 21px;
        box-sizing: border-box;
        padding: 1px 0 0 46px;
        background: #535353;
        border-top: 1px solid #2b2b2b;
        border-bottom: 1px solid #2b2b2b;
        color: #cfcfcf;
    }
    .menus button {
        height: 17px;
        padding: 0 11px;
    }
    .menus .active {
        position: relative;
        height: 20px;
        box-sizing: border-box;
        padding: 0 9px 2px;
        border: 1px solid #2b2b2b;
        border-bottom: 0;
        background: linear-gradient(#6e6e6e, #5b5b5b);
        color: #fff;
    }
    .menus .hover {
        box-sizing: border-box;
        padding: 0 8px;
        margin: 0 2px;
        border: 1px solid #6f6f6f;
        background: #494949;
        color: #eee;
    }
    .menus .pin {
        margin-left: 10px;
        gap: 6px;
    }

    /* ribbon */
    .ribbon {
        display: flex;
        flex: none;
        height: 99px;
        box-sizing: border-box;
        border-bottom: 1px solid #8a8a8a;
        background: linear-gradient(#545454, #393939);
    }
    .panel {
        display: flex;
        flex: none;
        flex-direction: column;
        box-sizing: border-box;
        border-right: 1px solid #454545;
        border-left: 1px solid #6a6a6a;
        border-bottom: 1px solid #333;
        background: #5b5b5b;
    }
    .draw { width: 226px; }
    .modify { width: 250px; }
    .annotation { width: 189px; }
    .layers { width: 273px; }
    .block { width: 161px; }
    .properties { width: 265px; }
    .groups { width: 69px; }
    .utilities { width: 97px; }
    .clipboard { width: 80px; }
    .view { width: 61px; }
    .tools {
        display: flex;
        flex: 1;
    }
    .panel-title {
        position: relative;
        display: flex;
        align-items: center;
        justify-content: center;
        gap: 6px;
        height: 18px;
        background: linear-gradient(#474747, #525252);
    }
    .panel-title span,
    .small span {
        padding-bottom: 2px;
    }
    .launchable {
        padding-right: 14px;
    }
    .launch {
        position: absolute;
        right: 2px;
        top: 4px;
    }
    .big {
        flex-direction: column;
        padding-top: 7px;
    }
    .big span {
        margin: 2px 0;
        line-height: 15px;
        text-align: center;
        white-space: normal;
    }
    .w40 { width: 40px; }
    .w44 { width: 44px; }
    .w48 { width: 48px; }
    .w54 { width: 54px; }
    .w56 { width: 56px; }
    .w60 { width: 60px; }
    .w62 { width: 62px; }
    .w70 { width: 70px; }
    .stack {
        display: flex;
        flex-direction: column;
        padding-top: 4px;
    }
    .indent {
        padding-left: 8px;
    }
    .grow {
        flex: 1;
    }
    .small {
        height: 24px;
        gap: 5px;
    }
    .small .arrow {
        margin-left: 3px;
    }
    .draw .small .arrow {
        margin-left: 2px;
    }
    .draw .stack {
        padding-left: 4px;
    }
    .matrix {
        display: grid;
        grid-template-columns: 72px 69px 74px 20px;
        padding: 4px 0 0 6px;
        height: 72px;
    }
    .matrix .arrow {
        margin-left: auto;
        margin-right: 12px;
    }
    .layer-grid {
        display: grid;
        grid-template-columns: 24px 24px 24px 24px 110px;
        padding-left: 4px;
    }
    .combo {
        position: relative;
        display: flex;
        align-items: center;
        flex: 1;
        height: 22px;
        margin: 0 2px 2px 0;
        box-sizing: border-box;
        border: 1px solid #333;
        background: linear-gradient(#737373, #545454);
    }
    .combo select {
        flex: 1;
        height: 20px;
        padding: 0 0 1px;
        border: 0;
        appearance: none;
        background: none;
        font: 11px "Open Sans", sans-serif;
        color: #f2f2f2;
    }
    .combo option {
        background: #555;
    }
    .combo .arrow {
        position: absolute;
        right: 2px;
        width: 8px;
        height: 5px;
        pointer-events: none;
    }
    .layers .combo {
        flex: none;
    }
    .states {
        display: flex;
        align-items: center;
        gap: 3px;
        padding-left: 3px;
    }
    .combo .layer {
        padding-left: 5px;
    }
    .states .swatch {
        width: 12px;
        height: 12px;
        border: 1px solid #000;
        background: #fff;
        margin-left: 2px;
    }
    .states .plain {
        width: 14px;
        height: 14px;
        margin-left: 9px;
        border-color: #888;
    }
    .combo .color {
        padding-left: 10px;
    }
    .rule {
        width: 64px;
        height: 1px;
        margin: 0 2px 0 3px;
        background: #fff;
    }
    .prop {
        display: flex;
        align-items: center;
        gap: 2px;
        height: 24px;
    }
    .pressed {
        display: flex;
        box-sizing: border-box;
        width: 24px;
        height: 22px;
        margin: 1px 0 0 -4px;
        padding-left: 3px;
        align-items: center;
        background: linear-gradient(#7d9ccc, #54719f);
        border: 1px solid #2b4268;
    }
    .groups .tools {
        gap: 2px;
    }
    .utilities .tools {
        gap: 3px;
    }
    .clipboard .tools {
        gap: 2px;
    }

    /* drawing tabs */
    .files {
        display: flex;
        flex: none;
        height: 29px;
        box-sizing: border-box;
        padding: 3px 0 0 15px;
        background: #393939;
        border-bottom: 4px solid #5a5a5a;
        color: #b4b4b4;
    }
    .file {
        position: relative;
        display: flex;
        align-items: center;
        width: 123px;
        height: 22px;
    }
    .shape {
        position: absolute;
        left: 0;
        top: 0;
        width: 134px;
        height: 22px;
    }
    .file .name {
        position: relative;
        flex: 1;
        padding-left: 18px;
    }
    .file .close {
        position: relative;
        margin-right: 4px;
    }
    .current {
        z-index: 1;
        color: #fff;
    }
    .add {
        width: 22px;
        height: 15px;
        margin: 4px 0 0 15px;
        justify-content: center;
        background: #545454;
        border-radius: 4px 12px 0 8px;
    }
    .overflow {
        height: 18px;
        margin: 0 10px 0 auto;
    }

    /* canvas */
    .viewport {
        position: relative;
        flex: 1;
        min-height: 0;
        background: #212830;
        overflow: hidden;
    }
    .drawing {
        position: absolute;
        inset: 0;
        width: 100%;
        height: 100%;
    }
    .blue {
        fill: none;
        stroke: #36587c;
        stroke-width: 1;
    }
    .solid {
        fill: #212830;
    }
    .head,
    .sub {
        font-family: "Liberation Sans", Arial, sans-serif;
        font-size: 51px;
        fill: #999;
    }
    .sub {
        font-size: 32px;
    }
    .ucs {
        fill: none;
        stroke: #e8e8e8;
    }
    .viewlabel {
        position: absolute;
        left: 3px;
        top: 4px;
        font-size: 12px;
        line-height: 18px;
    }
    .doc-controls {
        position: absolute;
        right: 10px;
        top: 9px;
        display: flex;
        gap: 8px;
    }
    .cube {
        position: absolute;
        right: 15px;
        top: 36px;
        display: flex;
        flex-direction: column;
        align-items: center;
        gap: 11px;
    }
    .dirs {
        font: bold 22px "Liberation Sans", sans-serif;
        fill: #a6a8a9;
    }
    .top {
        font: bold 12px "Open Sans", sans-serif;
        fill: #4d5257;
    }
    .wcs {
        width: 48px;
        height: 18px;
        box-sizing: border-box;
        padding-left: 4px;
        gap: 5px;
        border: 1px solid #6e717c;
        border-radius: 4px;
        background: #979aa5;
        font: 11px "Liberation Sans", sans-serif;
        color: #4a4d55;
    }
    .navbar {
        position: absolute;
        right: 4px;
        top: 236px;
        display: flex;
        flex-direction: column;
        align-items: center;
        box-sizing: border-box;
        width: 33px;
        height: 213px;
        border: 1px solid #191d22;
        border-radius: 4px;
        background: #595c5e;
        color: #33373a;
    }
    .navbar button {
        flex-direction: column;
        gap: 5px;
        width: 26px;
        padding-top: 3px;
    }
    .navbar .ruled {
        margin: 5px 0 2px;
        border-top: 1px dotted #7b7e80;
    }
    .knob {
        align-self: flex-end;
        width: 5px;
        height: 5px;
        margin: 1px 2px 6px 0;
        border: 1px solid #45494b;
        border-radius: 50%;
    }
    .navbar .knob:last-child {
        margin: auto 2px 2px 0;
    }
    .activate {
        position: absolute;
        right: 82px;
        bottom: 12px;
        font-size: 14px;
        line-height: 21px;
        color: #7f8386;
    }
    .activate .large {
        font-size: 19px;
        line-height: 26px;
    }
    .console {
        position: absolute;
        left: 381px;
        right: 380px;
        bottom: 0;
    }
    .history {
        display: flex;
        flex-direction: column;
        align-items: flex-start;
        gap: 5px;
        padding: 0 0 3px 62px;
        font: 12px "DejaVu Sans Mono", monospace;
        color: #f0f0f0;
    }
    .history p {
        padding: 0 2px;
        line-height: 15px;
        border-radius: 2px;
        background: #5a5c5e;
        white-space: nowrap;
    }
    .history .old {
        background: #4c4f52;
        color: #b5b5b5;
    }
    .history .mid {
        color: #dcdcdc;
    }
    .cmd {
        display: flex;
        height: 27px;
        box-sizing: border-box;
        border: 1px solid #6a6a6a;
        background: #bbbcbe;
    }
    .grip {
        display: flex;
        align-items: center;
        justify-content: space-between;
        width: 54px;
        box-sizing: border-box;
        padding: 0 5px 0 3px;
        background: linear-gradient(#4a4a4a, #606060);
    }
    .dots {
        width: 6px;
        height: 18px;
        background: radial-gradient(#999 1px, transparent 1px) 0 0 / 3px 3px;
    }
    .recent {
        padding: 0 6px 0 5px;
        gap: 3px;
        color: #555;
    }
    .cmd input {
        flex: 1;
        min-width: 0;
        padding: 0;
        border: 0;
        background: none;
        font: italic 12px "DejaVu Sans Mono", monospace;
        color: #222;
    }
    .cmd input::placeholder {
        color: #6c6d70;
    }
    .up {
        padding: 0 4px;
    }

    /* status bar */
    .status {
        display: flex;
        flex: none;
        justify-content: space-between;
        height: 29px;
        box-sizing: border-box;
        border-top: 1px solid #5a5a5a;
        background: #393939;
    }
    .layouts {
        display: flex;
        align-items: flex-start;
        padding-left: 10px;
    }
    .layout {
        position: relative;
        height: 17px;
        padding: 0 12px;
        color: #bdbdbd;
    }
    .layout span,
    .layout svg {
        position: relative;
    }
    .layout::before {
        content: "";
        position: absolute;
        inset: 0;
        background: linear-gradient(#484848, #606060);
        clip-path: polygon(0 0, 100% 0, 92% 100%, 10% 100%);
    }
    .layout.on {
        padding: 0 13px;
        font-weight: 700;
        color: #fff;
    }
    .layout.on::before {
        background: linear-gradient(#5c5c5c, #8a8c8c);
    }
    .layout.plus {
        margin-left: 2px;
        padding: 0 8px;
    }
    .toggles {
        display: flex;
        gap: 2px;
        padding-bottom: 2px;
        background: #333;
    }
    .set {
        display: flex;
        align-items: center;
        box-sizing: border-box;
        border: 1px solid #7b7b7b;
        background: #4f4f4f;
    }
    .split {
        align-self: stretch;
        width: 1px;
        background: #7b7b7b;
    }
    .word {
        padding: 0 3px;
        font-size: 12px;
    }
    .toggle {
        width: 24px;
        height: 22px;
        justify-content: center;
    }
    .toggle.on {
        width: 22px;
        margin: 0 1px;
        background: #5c8cc2;
    }
    .more {
        width: 15px;
        height: 22px;
        justify-content: center;
    }
    .ratio {
        gap: 4px;
        padding: 0 3px 0 5px;
        color: #fff;
    }
</style>
